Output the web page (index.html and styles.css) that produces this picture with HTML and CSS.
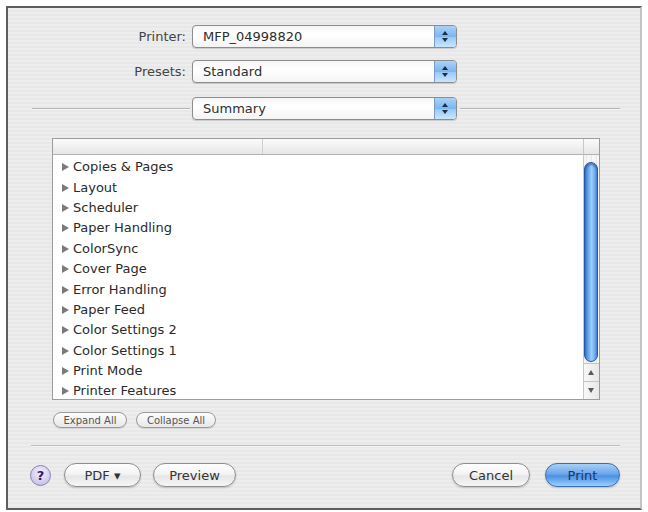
FILE: index.html
```html
<!DOCTYPE html>
<html>
<head>
    <title>Print</title>
    <link rel="stylesheet" href="styles.css">
</head>
<body>
    <div class="window">
        <div class="setup">
            <label class="setup-label">Printer:</label>
            <div class="popup"><span class="popup-text">MFP_04998820</span><span class="stepper"></span></div>
            <label class="setup-label">Presets:</label>
            <div class="popup"><span class="popup-text">Standard</span><span class="stepper"></span></div>
        </div>

        <div class="pane-row">
            <div class="rule"></div>
            <div class="popup"><span class="popup-text">Summary</span><span class="stepper"></span></div>
            <div class="rule rule-right"></div>
        </div>

        <div class="list">
            <div class="list-head"><div class="head-cell"></div></div>
            <div class="list-corner"></div>
            <ul class="rows">
                <li><span>Copies &amp; Pages</span></li>
                <li><span>Layout</span></li>
                <li><span>Scheduler</span></li>
                <li><span>Paper Handling</span></li>
                <li><span>ColorSync</span></li>
                <li><span>Cover Page</span></li>
                <li><span>Error Handling</span></li>
                <li><span>Paper Feed</span></li>
                <li><span>Color Settings 2</span></li>
                <li><span>Color Settings 1</span></li>
                <li><span>Print Mode</span></li>
                <li><span>Printer Features</span></li>
            </ul>
            <div class="scrollbar">
                <div class="track"><div class="thumb"></div></div>
                <div class="arrow arrow-up"></div>
                <div class="arrow arrow-down"></div>
            </div>
        </div>

        <div class="list-buttons">
            <button class="mini" style="width: 74px">Expand All</button>
            <button class="mini" style="width: 80px">Collapse All</button>
        </div>

        <div class="separator"></div>

        <div class="actions">
            <button class="help">?</button>
            <button class="pill pdf">PDF &#9662;</button>
            <button class="pill preview">Preview</button>
            <div class="spacer"></div>
            <button class="pill cancel">Cancel</button>
            <button class="pill print">Print</button>
        </div>
    </div>
</body>
</html>
```

FILE: styles.css
```css
body {
    margin: 0;
    background-color: #fff;
    font-family: "DejaVu Sans", Verdana, sans-serif;
    font-size: 13px;
    color: #333;
}

.window {
    width: 632px;
    height: 500px;
    margin: 6px;
    border: 2px solid #5e5e5e;
    border-right-color: #c4c4c4;
    background: repeating-linear-gradient(to bottom, #ededed 0 2px, #e8e8e8 2px 4px);
    display: flex;
    flex-direction: column;
}

/* printer / presets popups */
.setup {
    display: grid;
    grid-template-columns: 178px 265px;
    column-gap: 6px;
    row-gap: 12px;
    padding-top: 17px;
    align-items: center;
}

.setup-label {
    text-align: right;
    color: #444;
}

.popup {
    height: 21px;
    border: 1px solid #8c8c8c;
    border-radius: 4px;
    background: linear-gradient(to bottom, #f6f6f6, #fff 40%, #f4f4f4);
    box-shadow: 0 1px 1px rgba(0, 0, 0, 0.15);
    display: flex;
    align-items: center;
    overflow: hidden;
}

.popup-text {
    flex: 1;
    padding-left: 10px;
    color: #2e2e2e;
}

.stepper {
    width: 21px;
    height: 100%;
    border-left: 1px solid #7a9cc4;
    background: linear-gradient(to bottom, #aad2f8, #7cb6ee 50%, #94c8f6 51%, #c8e6ff);
    position: relative;
}

.stepper::before,
.stepper::after {
    content: "";
    position: absolute;
    left: 7px;
    border-left: 3.5px solid transparent;
    border-right: 3.5px solid transparent;
}

.stepper::before {
    top: 5px;
    border-bottom: 4px solid #1e2c44;
}

.stepper::after {
    bottom: 5px;
    border-top: 4px solid #1e2c44;
}

.pane-row {
    display: flex;
    align-items: center;
    margin-top: 14px;
    padding-left: 24px;
}

.pane-row .popup {
    width: 263px;
    margin: 0 3px 0 2px;
}

.rule {
    width: 158px;
    height: 1px;
    background-color: #b4b4b4;
    border-bottom: 1px solid #f6f6f6;
}

.rule-right {
    width: 160px;
}

/* outline list of panes */
.list {
    margin: 18px 0 0 44px;
    width: 546px;
    height: 260px;
    border: 1px solid #9c9c9c;
    background-color: #fff;
    display: grid;
    grid-template-columns: 1fr 16px;
    grid-template-rows: 16px 1fr;
    overflow: hidden;
}

.list-head {
    border-bottom: 1px solid #b2b2b2;
    background: linear-gradient(to bottom, #fbfbfb, #e6e6e6);
}

.head-cell {
    width: 209px;
    height: 100%;
    border-right: 1px solid #cfcfcf;
}

.list-corner {
    border-bottom: 1px solid #b2b2b2;
    border-left: 1px solid #c8c8c8;
    background: linear-gradient(to bottom, #fbfbfb, #e6e6e6);
}

.rows {
    list-style: none;
    margin: 0;
    padding: 2px 0 0 9px;
    overflow: hidden;
}

.rows li {
    height: 20.4px;
    display: flex;
    align-items: center;
    color: #2a2a2a;
    white-space: nowrap;
}

.rows li span {
    line-height: 14px;
}

.rows li::before {
    content: "";
    width: 0;
    height: 0;
    border-top: 4px solid transparent;
    border-bottom: 4px solid transparent;
    border-left: 7px solid #7a7a7a;
    margin-right: 4px;
}

.scrollbar {
    border-left: 1px solid #c8c8c8;
    background: repeating-linear-gradient(to right, #f4f4f4 0 2px, #e9e9e9 2px 3px, #f7f7f7 3px 5px);
    display: flex;
    flex-direction: column;
}

.track {
    flex: 1;
    padding: 7px 1px 0 0;
}

.thumb {
    height: 198px;
    border-radius: 7px;
    border: 1px solid #2558a6;
    background: linear-gradient(to right, #3a78d2, #74b2f2 35%, #a0cefa 55%, #4f8fe2);
    box-shadow: inset 0 2px 2px rgba(20, 50, 110, 0.5);
}

.arrow {
    height: 17px;
    border-top: 1px solid #c4c4c4;
    background: linear-gradient(to right, #f8f8f8, #e8e8e8);
    position: relative;
}

.arrow::after {
    content: "";
    position: absolute;
    left: 4px;
    top: 6px;
    border-left: 3.5px solid transparent;
    border-right: 3.5px solid transparent;
}

.arrow-up::after {
    border-bottom: 5px solid #5a5a5a;
}

.arrow-down::after {
    border-top: 5px solid #5a5a5a;
}

/* buttons */
button {
    font-family: inherit;
    cursor: pointer;
}

.list-buttons {
    display: flex;
    gap: 9px;
    margin-top: 12px;
    padding-left: 45px;
}

.mini {
    height: 16px;
    padding: 0;
    font-size: 10px;
    color: #555;
    border: 1px solid #9a9a9a;
    border-radius: 8px;
    background: linear-gradient(to bottom, #fdfdfd, #e8e8e8);
    box-shadow: 0 1px 1px rgba(0, 0, 0, 0.12);
}

.separator {
    margin: 17px 0 0 23px;
    width: 589px;
    height: 1px;
    background-color: #bcbcbc;
    border-bottom: 1px solid #f6f6f6;
}

.actions {
    display: flex;
    align-items: center;
    margin-top: 16px;
    padding: 0 20px 0 22px;
}

.help {
    width: 21px;
    height: 21px;
    padding: 0;
    margin-right: 13px;
    border-radius: 50%;
    border: 1px solid #8b80b4;
    background: radial-gradient(circle at 50% 35%, #f4f0ff, #cfc6ec 70%, #b3a8d8);
    color: #2a2060;
    font-size: 13px;
    font-weight: bold;
    line-height: 19px;
}

.pill {
    height: 24px;
    padding: 0;
    font-size: 13px;
    color: #333;
    border: 1px solid #8e8e8e;
    border-radius: 12px;
    background: linear-gradient(to bottom, #fefefe, #f4f4f4 45%, #e6e6e6 55%, #f6f6f6);
    box-shadow: 0 1px 2px rgba(0, 0, 0, 0.2);
}

.pdf {
    width: 77px;
    margin-right: 12px;
}

.preview {
    width: 83px;
}

.spacer {
    flex: 1;
}

.cancel {
    width: 78px;
    margin-right: 15px;
}

.print {
    width: 75px;
    color: #1c3566;
    border-color: #3d6cae;
    background: linear-gradient(to bottom, #a8d0f6, #6aa6ea 45%, #4a90e2 55%, #9cd0ff);
}
```
